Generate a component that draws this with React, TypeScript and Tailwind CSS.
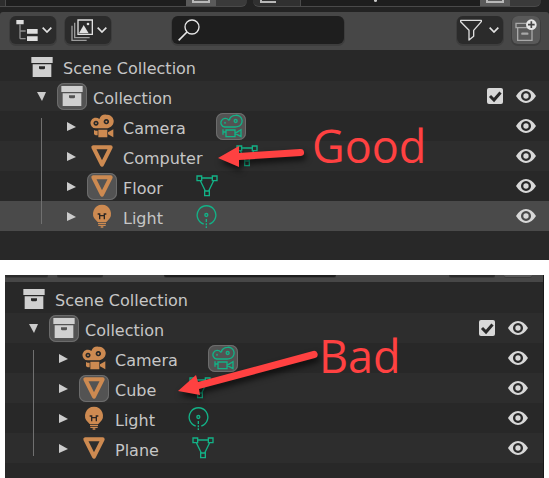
import type { ReactNode } from "react";

type Kind = "camera" | "mesh" | "light";
type Item = { name: string; kind: Kind; boxed?: boolean; dataBoxed?: boolean; selected?: boolean };

const good: Item[] = [
  { name: "Camera", kind: "camera", dataBoxed: true },
  { name: "Computer", kind: "mesh" },
  { name: "Floor", kind: "mesh", boxed: true },
  { name: "Light", kind: "light", selected: true },
];

const bad: Item[] = [
  { name: "Camera", kind: "camera", dataBoxed: true },
  { name: "Cube", kind: "mesh", boxed: true },
  { name: "Light", kind: "light" },
  { name: "Plane", kind: "mesh" },
];

function Archive() {
  return (
    <svg viewBox="0 0 66 60" className="h-5 w-[22px]" fill="#d0d0d0">
      <path d="M1 0h64v18H1z" />
      <path fillRule="evenodd" d="M5 22h56v38H5zM24 28v5q0 4 4 4h10q4 0 4-4v-5z" />
    </svg>
  );
}

function ObjectIcon({ kind }: { kind: Kind }) {
  if (kind === "camera")
    return (
      <svg viewBox="0 0 72 72" className="size-6" fill="#cd8a51">
        <path
          fillRule="evenodd"
          d="M49 2a20 20 0 0 1 8 39q-4 2-9 2H18A16 16 0 1 1 28 15A20 20 0 0 1 49 2zM49 15a8 8 0 1 0 .1 0zM18 20a7.500 7.500 0 1 0 .1 0z"
        />
        <circle cx="49" cy="23" r="3" />
        <circle cx="18" cy="27.500" r="2.500" />
        <path d="M25 47h27v23H25zM12 48l5 2h6v14h-6l-5-3zM70 46v24L54 61v-6z" />
      </svg>
    );
  if (kind === "light")
    return (
      <svg viewBox="0 0 72 72" className="size-6">
        <path d="M36 2a27 27 0 0 1 18 47q-3 3-5 5H23q-2-2-5-5A27 27 0 0 1 36 2z" fill="#cd8a51" />
        <path d="M23 30h6v5h14v-5h6M29 33v13M43 33v13" fill="none" stroke="#2b2522" strokeWidth="4" />
        <path d="M24 58h24M25 64h22M32 69h8" stroke="#cd8a51" strokeWidth="4" />
      </svg>
    );
  return (
    <svg viewBox="0 0 72 72" className="size-6" fill="none" stroke="#cd8a51" strokeWidth="12" strokeLinejoin="round">
      <path d="M10 10h52L36 62z" />
    </svg>
  );
}

function DataIcon({ kind }: { kind: Kind }) {
  const stroke = "#13b287";
  if (kind === "camera")
    return (
      <svg viewBox="0 0 72 72" className="size-6" fill="none" stroke={stroke} strokeWidth="4">
        <path d="M49 4a17 17 0 0 1 6 34q-3 1-7 1H17A13 13 0 1 1 29 18q4 0 3-4Q38 4 49 4z" />
        <circle cx="50" cy="21" r="4.500" />
        <circle cx="18" cy="26" r="1" />
        <path d="M21 48h27v20H21zM12 46v16M12 54h9M48 58l18-11v21L48 58" />
      </svg>
    );
  if (kind === "light")
    return (
      <svg viewBox="3 0 72 72" className="size-6" fill="none" stroke={stroke} strokeWidth="4">
        <path d="M26 60A28 28 0 1 1 43 60" />
        <circle cx="34" cy="33" r="4.500" />
        <path d="M34 45v9M34 58v6M34 67v5" />
      </svg>
    );
  return (
    <svg viewBox="3 0 72 72" className="size-6" fill="none" stroke={stroke} strokeWidth="4">
      <path d="M6 6h14v14H6zM52 6h14v14H52zM29 51h14v14H29zM20 12h32M16 20l15 31M56 20L41 51" />
    </svg>
  );
}

function EyeButton({ name }: { name: string }) {
  return (
    <button type="button" aria-label={`Toggle visibility of ${name}`} className="grid place-items-center">
      <svg viewBox="0 0 60 42" className="h-3.5 w-5">
        <path
          fillRule="evenodd"
          fill="#d8d8d8"
          d="M0 21Q13 0 30 0T60 21Q47 42 30 42T0 21zM30 6a15 15 0 1 0 .1 0z"
        />
        <circle cx="30" cy="21" r="8" fill="#d8d8d8" />
      </svg>
    </button>
  );
}

function IconBox({ boxed, children }: { boxed?: boolean; children: ReactNode }) {
  return (
    <span
      className={`grid h-[27px] w-[30px] shrink-0 place-items-center rounded-[7px] ${
        boxed ? "bg-[#535353] ring-1 ring-inset ring-[#6c6c6c]" : ""
      }`}
    >
      {children}
    </span>
  );
}

function Expander({ open, name }: { open?: boolean; name: string }) {
  return (
    <button type="button" aria-label={`Expand ${name}`} aria-expanded={!!open} className="grid w-[30px] place-items-center">
      <svg viewBox="0 0 10 10" className="size-2.5" fill="#cccccc">
        <path d={open ? "M0 1h9L5 10z" : "M0 1v9l9-4z"} />
      </svg>
    </button>
  );
}

function Chevron() {
  return (
    <svg viewBox="0 0 30 18" className="h-1.5 w-2.5" fill="none" stroke="#e2e2e2" strokeWidth="5">
      <path d="M2 2l13 13L28 2" />
    </svg>
  );
}

function Outliner({ items, inset, id, right }: { items: Item[]; inset: string; id: string; right: string }) {
  return (
    <div className="text-base text-[#c6c6c6]">
      <div className="flex h-[31px] items-center bg-[#282828] pt-0.5">
        <div className={`flex items-center gap-1.5 pl-[27px] ${inset}`}>
          <IconBox>
            <Archive />
          </IconBox>
          <span className="pt-1">Scene Collection</span>
        </div>
      </div>
      <div className={`flex h-[30px] items-center justify-between bg-[#2d2d2d] ${right}`}>
        <div className={`flex items-center pl-[27px] ${inset}`}>
          <Expander open name="Collection" />
          <IconBox boxed>
            <Archive />
          </IconBox>
          <label htmlFor={id} className="pt-1.5 pl-1.5">
            Collection
          </label>
        </div>
        <div className="flex items-center gap-[13px]">
          <span className="grid size-4">
            <input
              id={id}
              type="checkbox"
              defaultChecked
              className="col-start-1 row-start-1 size-4 appearance-none rounded-[2px] bg-[#d8d8d8]"
            />
            <svg
              viewBox="0 0 16 16"
              className="pointer-events-none col-start-1 row-start-1 size-4"
              fill="none"
              stroke="#292929"
              strokeWidth="3"
            >
              <path d="M3 8l4 4 6.500-7.500" />
            </svg>
          </span>
          <EyeButton name="Collection" />
        </div>
      </div>
      <div className="relative">
        {items.map((item, i) => (
          <div
            key={item.name}
            className={`flex h-[30px] items-center justify-between ${right} ${
              item.selected ? "bg-[#4a4a4a]" : i % 2 ? "bg-[#2d2d2d]" : "bg-[#282828]"
            }`}
          >
            <div className={`flex items-center pl-[57px] ${inset}`}>
              <Expander name={item.name} />
              <IconBox boxed={item.boxed}>
                <ObjectIcon kind={item.kind} />
              </IconBox>
              <span className="pt-1.5 pr-[30px] pl-1.5">{item.name}</span>
              <IconBox boxed={item.dataBoxed}>
                <DataIcon kind={item.kind} />
              </IconBox>
            </div>
            <EyeButton name={item.name} />
          </div>
        ))}
        <div className={`absolute inset-y-[7px] left-[41px] w-px bg-[#707070] ${inset}`} />
      </div>
    </div>
  );
}

function WindowStrip() {
  const field = "border-b border-[#4a4a4a] bg-[#1e1e1e]";
  const button = "flex w-[30px] justify-center border-b border-[#4a4a4a] bg-[#5a5a5a]";
  const end = "w-[31px] rounded-br-md border-b border-[#4a4a4a] bg-[#3a3a3a]";
  const page = <span className="h-[3px] w-[18px] border-2 border-t-0 border-[#b8b8b8]" />;
  return (
    <div className="flex h-3 bg-[#232323] pr-2 pb-[5px]">
      <div className="w-1.5 border-r border-b border-[#4a4a4a] bg-[#2d2d2d]" />
      <div className={`w-[180px] ${field}`} />
      <div className={button}>{page}</div>
      <div className={end} />
      <div className="ml-1.5 flex w-12 rounded-bl-md border-r border-b border-[#4a4a4a] bg-[#303030] pl-[7px]">
        <span className="h-[3px] w-4 border-b-2 border-l-2 border-[#b8b8b8]" />
      </div>
      <div className={`flex-1 pl-[73px] ${field}`}>
        <span className="block h-0.5 w-[3px] rounded-b-sm bg-[#c8c8c8]" />
      </div>
      <div className={button}>{page}</div>
      <div className={end} />
    </div>
  );
}

function Toolbar() {
  const button =
    "flex h-7 w-[46px] shrink-0 items-center justify-between rounded-md bg-[#2b2b2b] pr-1 shadow-[0_1px_0_1px_#3d3d3d]";
  return (
    <div className="bg-[#232323]">
      <div className="flex h-[38px] items-center rounded-t-[3px] bg-[#474747] pr-[9px] pb-0.5 pl-2.5">
        <button type="button" aria-label="Editor type" className={`pl-1.5 ${button}`}>
          <svg viewBox="0 0 66 66" className="size-[22px]" fill="#dedede">
            <path d="M1 3h22v13H1zM33 30h32v14H33zM33 52h32v14H33z" />
            <path d="M12 16v43M12 36h17M12 59h17" fill="none" stroke="#8f8f8f" strokeWidth="4" />
          </svg>
          <Chevron />
        </button>
        <button type="button" aria-label="Display mode" className={`ml-[9px] pl-1.5 ${button}`}>
          <svg viewBox="0 0 66 66" className="size-[22px]" fill="none" strokeWidth="4">
            <path d="M11 11v45h45M3 20v44h44" stroke="#9c9c9c" />
            <path d="M21 3h43v43H21z" stroke="#e0e0e0" />
            <path d="M24 43l14-25 15 25z" fill="#e0e0e0" />
            <circle cx="51" cy="15" r="4" fill="#e0e0e0" />
          </svg>
          <Chevron />
        </button>
        <div className="ml-[61px] grid h-7 w-[172px]">
          <input
            type="search"
            aria-label="Filter items"
            className="col-start-1 row-start-1 h-7 w-full rounded-md bg-[#1e1e1e] pl-8 text-sm text-[#c6c6c6] shadow-[0_1px_0_1px_#3d3d3d] outline-none"
          />
          <svg
            viewBox="0 0 66 66"
            className="pointer-events-none col-start-1 row-start-1 mt-[3px] ml-1.5 size-[22px]"
            fill="none"
            stroke="#e6e6e6"
            strokeWidth="4"
          >
            <circle cx="42" cy="24" r="21" />
            <path d="M27 39L2 64" strokeWidth="5" />
          </svg>
        </div>
        <button type="button" aria-label="Filter" className={`ml-auto pl-[3px] ${button}`}>
          <svg viewBox="0 0 66 66" className="size-[22px]" fill="none" stroke="#dedede" strokeWidth="4" strokeLinejoin="round">
            <path d="M2 4h62v4L41 34v18L27 63V34L2 8z" />
          </svg>
          <Chevron />
        </button>
        <button
          type="button"
          aria-label="New collection"
          className="ml-[9px] grid size-7 place-items-center rounded-md bg-[#595959] shadow-[0_1px_0_1px_#3d3d3d]"
        >
          <svg viewBox="0 0 66 66" className="size-[22px]" fill="none" stroke="#a8a8a8" strokeWidth="4">
            <path d="M35 13H3v13h45M8 28v36h43V32" />
            <path d="M22 44h15" strokeWidth="7" strokeLinecap="round" />
            <circle cx="49" cy="17" r="16" fill="#e6e6e6" stroke="none" />
            <path d="M49 7v20M39 17h20" stroke="#444444" strokeWidth="5" />
          </svg>
        </button>
      </div>
    </div>
  );
}

function ToolbarEdge() {
  const base = "h-0.5 rounded-b-md shadow-[0_1px_0_0_#3a3a3a]";
  return (
    <div className="flex h-[7px] bg-[#474747] pr-[11px]">
      <div className={`w-[43px] bg-[#2b2b2b] ${base}`} />
      <div className={`ml-[9px] w-[46px] bg-[#2b2b2b] ${base}`} />
      <div className={`ml-[61px] w-[172px] bg-[#1e1e1e] ${base}`} />
      <div className={`ml-auto w-[46px] bg-[#2b2b2b] ${base}`} />
      <div className={`ml-[9px] w-7 bg-[#595959] ${base}`} />
    </div>
  );
}

const note = "absolute font-['Open_Sans','Noto_Sans',sans-serif] text-[45px] leading-[60px] text-[#ff4141]";
const arrow = "pointer-events-none absolute overflow-visible drop-shadow-[2px_4px_3px_rgba(0,0,0,0.7)]";

export default function App() {
  return (
    <main className="bg-white font-['DejaVu_Sans',sans-serif]">
      <section className="relative bg-[#282828] pb-[29px]">
        <WindowStrip />
        <Toolbar />
        <Outliner items={good} inset="ml-0" id="good-collection" right="pr-[13px]" />
        <svg viewBox="0 0 90 24" className={`${arrow} top-[145px] left-[217px] h-6 w-[90px]`}>
          <path d="M1 13L22 1v7l61-4a3.500 3.500 0 0 1 1 7l-62 4v7z" fill="#ff4141" />
        </svg>
        <p className={`${note} top-[116px] left-[312px]`}>Good</p>
      </section>
      <section className="relative mx-[5px] mt-[15px] border-r border-[#181818] bg-[#282828] pb-[15px]">
        <ToolbarEdge />
        <Outliner items={bad} inset="-ml-[13px]" id="bad-collection" right="pr-[15px]" />
        <svg viewBox="0 0 142 48" className={`${arrow} top-[75px] left-[172px] h-12 w-[142px]`}>
          <path d="M1 41L19 25l2 7L136 1a3.500 3.500 0 0 1 2 7L22 39l1 6z" fill="#ff4141" />
        </svg>
        <p className={`${note} top-[51px] left-[314px]`}>Bad</p>
      </section>
    </main>
  );
}
